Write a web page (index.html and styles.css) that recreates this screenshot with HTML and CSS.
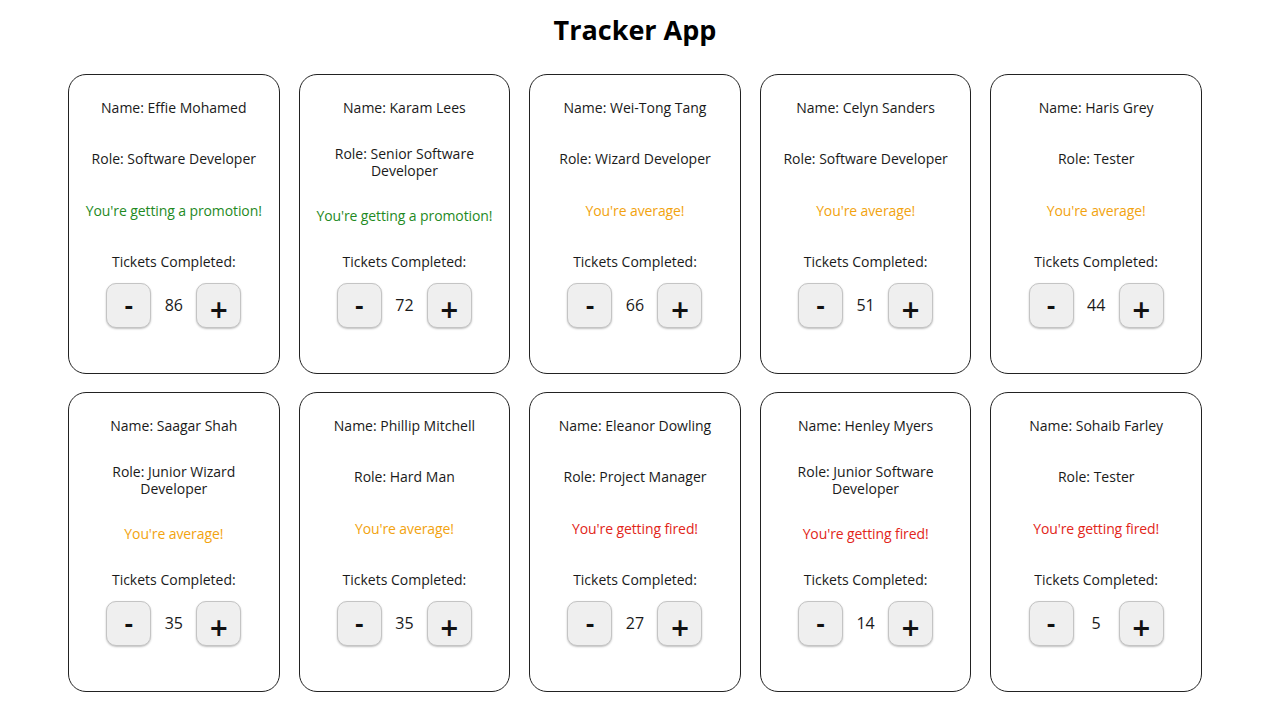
FILE: index.html
```html
<!DOCTYPE html>
<html lang="en">
<head>
<meta charset="utf-8">
<title>Tracker App</title>
<link rel="stylesheet" href="styles.css">
</head>
<body>
<h1 class="title">Tracker App</h1>
<main class="grid">
  <div class="card"><div class="info"><p>Name: Effie Mohamed</p><p>Role: Software Developer</p><p class="status promo">You're getting a promotion!</p><p>Tickets Completed:</p></div><div class="counter"><button class="btn">-</button><span class="count">86</span><button class="btn plus">+</button></div></div>
  <div class="card"><div class="info"><p>Name: Karam Lees</p><p>Role: Senior Software Developer</p><p class="status promo">You're getting a promotion!</p><p>Tickets Completed:</p></div><div class="counter"><button class="btn">-</button><span class="count">72</span><button class="btn plus">+</button></div></div>
  <div class="card"><div class="info"><p>Name: Wei-Tong Tang</p><p>Role: Wizard Developer</p><p class="status avg">You're average!</p><p>Tickets Completed:</p></div><div class="counter"><button class="btn">-</button><span class="count">66</span><button class="btn plus">+</button></div></div>
  <div class="card"><div class="info"><p>Name: Celyn Sanders</p><p>Role: Software Developer</p><p class="status avg">You're average!</p><p>Tickets Completed:</p></div><div class="counter"><button class="btn">-</button><span class="count">51</span><button class="btn plus">+</button></div></div>
  <div class="card"><div class="info"><p>Name: Haris Grey</p><p>Role: Tester</p><p class="status avg">You're average!</p><p>Tickets Completed:</p></div><div class="counter"><button class="btn">-</button><span class="count">44</span><button class="btn plus">+</button></div></div>
  <div class="card"><div class="info"><p>Name: Saagar Shah</p><p>Role: Junior Wizard Developer</p><p class="status avg">You're average!</p><p>Tickets Completed:</p></div><div class="counter"><button class="btn">-</button><span class="count">35</span><button class="btn plus">+</button></div></div>
  <div class="card"><div class="info"><p>Name: Phillip Mitchell</p><p>Role: Hard Man</p><p class="status avg">You're average!</p><p>Tickets Completed:</p></div><div class="counter"><button class="btn">-</button><span class="count">35</span><button class="btn plus">+</button></div></div>
  <div class="card"><div class="info"><p>Name: Eleanor Dowling</p><p>Role: Project Manager</p><p class="status fired">You're getting fired!</p><p>Tickets Completed:</p></div><div class="counter"><button class="btn">-</button><span class="count">27</span><button class="btn plus">+</button></div></div>
  <div class="card"><div class="info"><p>Name: Henley Myers</p><p>Role: Junior Software Developer</p><p class="status fired">You're getting fired!</p><p>Tickets Completed:</p></div><div class="counter"><button class="btn">-</button><span class="count">14</span><button class="btn plus">+</button></div></div>
  <div class="card"><div class="info"><p>Name: Sohaib Farley</p><p>Role: Tester</p><p class="status fired">You're getting fired!</p><p>Tickets Completed:</p></div><div class="counter"><button class="btn">-</button><span class="count">5</span><button class="btn plus">+</button></div></div>
</main>
</body>
</html>
```
FILE: styles.css
```css
html, body {
  margin: 0;
  padding: 0;
  background: #ffffff;
}
body {
  font-family: "Open Sans", "Noto Sans", sans-serif;
  color: #1a1a1a;
  padding-left: 3px;
}
.title {
  margin: 0;
  padding-top: 12px;
  height: 74px;
  box-sizing: border-box;
  text-align: center;
  font-size: 27px;
  line-height: 36px;
  font-weight: 700;
  color: #000;
}
.grid {
  width: 1134px;
  margin: 0 auto;
  display: grid;
  grid-template-columns: repeat(5, 1fr);
  column-gap: 19px;
  row-gap: 18px;
}
.card {
  height: 300px;
  box-sizing: border-box;
  border: 1px solid #222;
  border-radius: 18px;
  padding: 24px 6px 45px;
  display: flex;
  flex-direction: column;
  align-items: center;
}
.info {
  height: 172px;
  width: 100%;
  display: flex;
  flex-direction: column;
  justify-content: space-between;
  align-items: center;
}
.info p {
  margin: 0;
  font-size: 14px;
  line-height: 17px;
  text-align: center;
  padding: 0 10px;
}
.info p.status {
  padding: 0;
  letter-spacing: -0.1px;
}
.status.promo { color: #1f8a1f; }
.status.avg { color: #f2a30f; }
.status.fired { color: #e2261a; }
.counter {
  margin-top: 13px;
  display: flex;
  align-items: center;
}
.btn {
  width: 45px;
  height: 45px;
  box-sizing: border-box;
  border: 1px solid #c4c4c4;
  border-radius: 10px;
  background: #efefef;
  box-shadow: 0 1px 2px rgba(0,0,0,0.25);
  font-family: "DejaVu Sans", sans-serif;
  font-size: 22px;
  font-weight: 700;
  color: #111;
  padding: 0;
  line-height: 45px;
}
.btn.plus { font-size: 24px; padding-top: 4px; }
.count {
  width: 45px;
  text-align: center;
  font-size: 16px;
  margin-top: -1px;
}
```
